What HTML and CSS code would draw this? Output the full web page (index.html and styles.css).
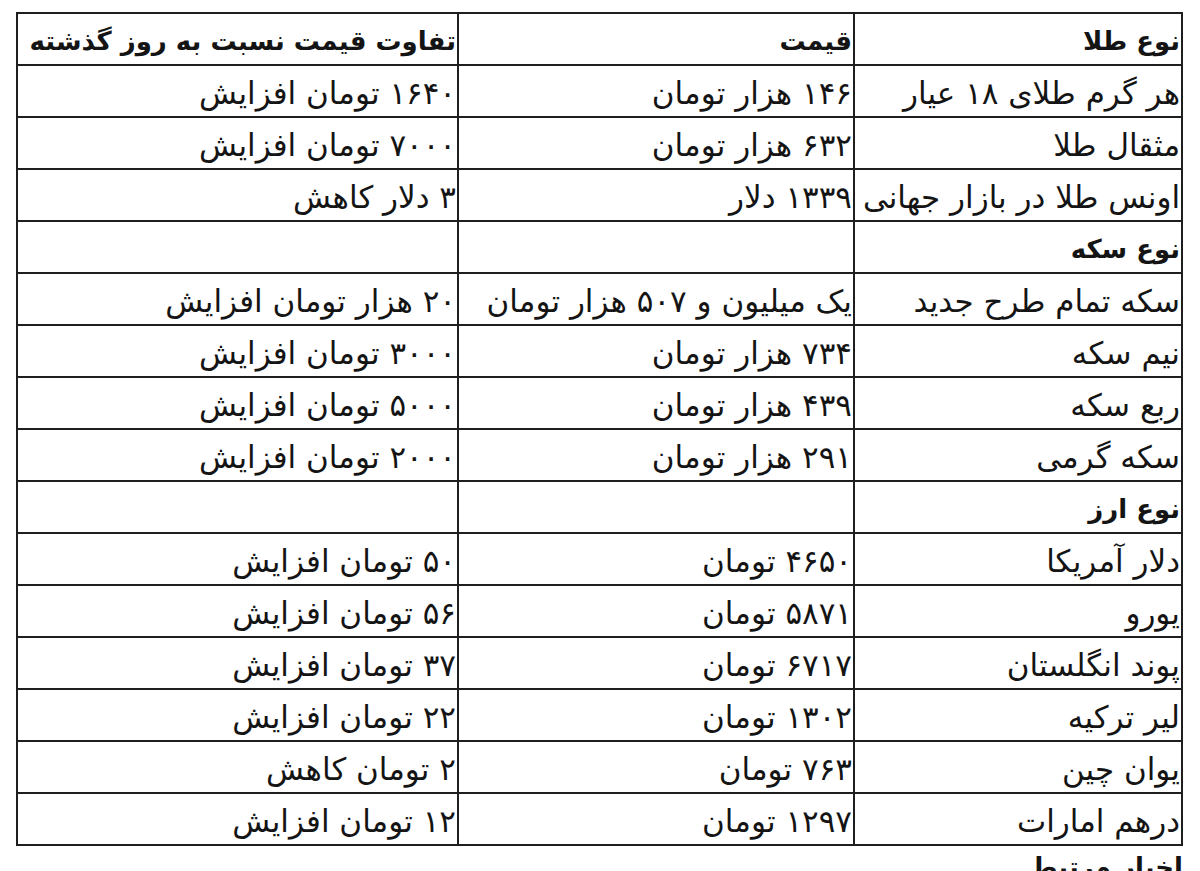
FILE: index.html
```html
<!DOCTYPE html>
<html lang="fa" dir="rtl">
<head>
<meta charset="utf-8">
<title>قیمت طلا، سکه و ارز</title>
<link rel="stylesheet" href="styles.css">
</head>
<body>
<div class="page">
<table class="prices">
  <colgroup>
    <col class="c-type">
    <col class="c-price">
    <col class="c-diff">
  </colgroup>
  <tr class="head"><td>نوع طلا</td><td>قیمت</td><td>تفاوت قیمت نسبت به روز گذشته</td></tr>
  <tr><td>هر گرم طلای ۱۸ عیار</td><td>۱۴۶ هزار تومان</td><td>۱۶۴۰ تومان افزایش</td></tr>
  <tr><td>مثقال طلا</td><td>۶۳۲ هزار تومان</td><td>۷۰۰۰ تومان افزایش</td></tr>
  <tr><td>اونس طلا در بازار جهانی</td><td>۱۳۳۹ دلار</td><td>۳ دلار کاهش</td></tr>
  <tr class="head"><td>نوع سکه</td><td></td><td></td></tr>
  <tr><td>سکه تمام طرح جدید</td><td>یک میلیون و ۵۰۷ هزار تومان</td><td>۲۰ هزار تومان افزایش</td></tr>
  <tr><td>نیم سکه</td><td>۷۳۴ هزار تومان</td><td>۳۰۰۰ تومان افزایش</td></tr>
  <tr><td>ربع سکه</td><td>۴۳۹ هزار تومان</td><td>۵۰۰۰ تومان افزایش</td></tr>
  <tr><td>سکه گرمی</td><td>۲۹۱ هزار تومان</td><td>۲۰۰۰ تومان افزایش</td></tr>
  <tr class="head"><td>نوع ارز</td><td></td><td></td></tr>
  <tr><td>دلار آمریکا</td><td>۴۶۵۰ تومان</td><td>۵۰ تومان افزایش</td></tr>
  <tr><td>یورو</td><td>۵۸۷۱ تومان</td><td>۵۶ تومان افزایش</td></tr>
  <tr><td>پوند انگلستان</td><td>۶۷۱۷ تومان</td><td>۳۷ تومان افزایش</td></tr>
  <tr><td>لیر ترکیه</td><td>۱۳۰۲ تومان</td><td>۲۲ تومان افزایش</td></tr>
  <tr><td>یوان چین</td><td>۷۶۳ تومان</td><td>۲ تومان کاهش</td></tr>
  <tr><td>درهم امارات</td><td>۱۲۹۷ تومان</td><td>۱۲ تومان افزایش</td></tr>
</table>
<p class="after">اخبار مرتبط</p>
</div>
</body>
</html>
```

FILE: styles.css
```css
html, body {
  margin: 0;
  padding: 0;
  background: #ffffff;
}

.page {
  padding: 12px 17px 0 18px;
  font-family: "DejaVu Sans", "Noto Sans", sans-serif;
  color: #141414;
}

.prices {
  width: 1165px;
  border-collapse: collapse;
  table-layout: fixed;
  border: 2px solid #1e1e1e;
}

.c-type { width: 328px; }
.c-price { width: 396px; }
.c-diff { width: 441px; }

.prices tr {
  height: 52px;
}

.prices td {
  border: 2px solid #1e1e1e;
  height: 46px;
  padding: 4px 1px 0 0;
  text-align: right;
  vertical-align: middle;
  font-size: 31px;
  line-height: 30px;
  white-space: nowrap;
  overflow: hidden;
}

.prices .head td {
  font-weight: bold;
  font-size: 26px;
}

.after {
  margin: 6px 0 0;
  font-weight: bold;
  font-size: 26px;
  line-height: 30px;
  text-align: right;
}
```
